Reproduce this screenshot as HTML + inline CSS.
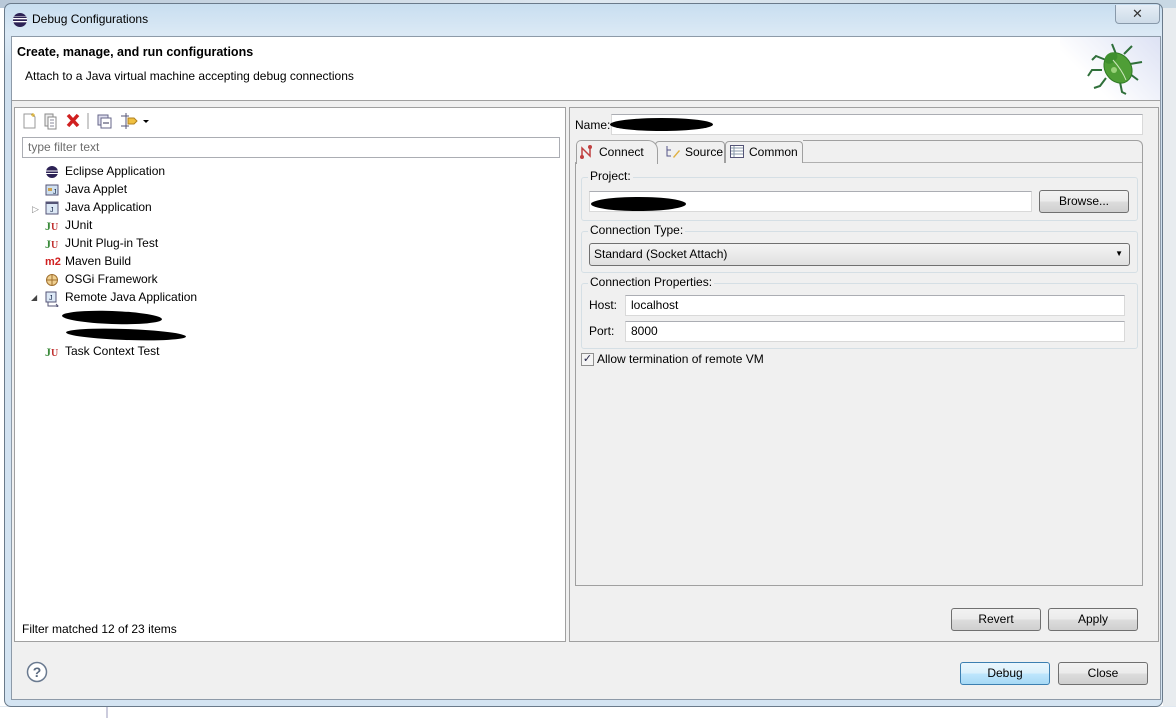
<!DOCTYPE html>
<html><head><style>
*{box-sizing:border-box;margin:0;padding:0}
body{width:1176px;height:718px;overflow:hidden;background:#fff;font-family:"Liberation Sans",sans-serif;font-size:12px;color:#000;position:relative}
.a{position:absolute}
.btn{position:absolute;border:1px solid #707070;border-radius:3px;background:linear-gradient(#f2f2f2 0%,#ebebeb 50%,#dddddd 51%,#cfcfcf 100%);text-align:center;line-height:20px;font-size:12px}
.inp{position:absolute;background:#fff;border:1px solid #d9d9d9;border-top-color:#abadb3;height:21px;line-height:19px;padding-left:5px}
.grp{position:absolute;border:1px solid #d5dfe5;border-radius:3px}
.lbl{position:absolute;background:#f0f0f0;padding:0 2px}
.tr{position:absolute;left:65px;font-size:12px}
.ic{position:absolute;left:45px;width:14px;height:14px}
.blot{position:absolute;background:#000;border-radius:50%}
</style></head><body>
<div class="a" style="left:1163px;top:0;width:13px;height:718px;background:#e8ecef"></div>
<div class="a" style="left:0;top:0;width:1176px;height:8px;background:linear-gradient(90deg,#b8c8d8,#dfe8f0,#c8d8e4)"></div>
<div class="a" style="left:0;top:706px;width:1176px;height:12px;background:#fff;border-top:1px solid #e0e8f0"></div>
<div class="a" style="left:106px;top:706px;width:2px;height:12px;background:#ccd"></div>
<div class="a" style="left:4px;top:3px;width:1159px;height:704px;border:1px solid #6a7a8a;border-radius:7px;background:linear-gradient(#c8def0,#dbe9f5 30px,#cfe0ef 60px,#d4e4f2)"></div>
<svg class="a" style="left:12px;top:12px" width="16" height="16" viewBox="0 0 16 16"><circle cx="8" cy="8" r="7" fill="#2c2255"/><rect x="1" y="6" width="14" height="1.3" fill="#fff"/><rect x="1" y="9" width="14" height="1.3" fill="#fff"/><rect x="2" y="4" width="12" height="0.8" fill="#fff" opacity=".6"/></svg>
<div class="a" style="left:32px;top:12px;font-size:12px">Debug Configurations</div>
<div class="a" style="left:1115px;top:5px;width:45px;height:19px;border:1px solid #8899aa;border-top:none;border-radius:0 0 4px 4px;background:linear-gradient(#e6eef6,#cddbe8);text-align:center;font-size:13px;color:#333;line-height:18px">✕</div>
<div class="a" style="left:11px;top:36px;width:1150px;height:664px;background:#f0f0f0;border:1px solid #8d9aa8"></div>
<div class="a" style="left:12px;top:37px;width:1148px;height:64px;background:#fff;border-bottom:1px solid #a0a0a0"></div>
<div class="a" style="left:1060px;top:37px;width:100px;height:63px;background:linear-gradient(225deg,#dde2f4,#fff 70%)"></div>
<div class="a" style="left:17px;top:45px;font-weight:bold;font-size:12.5px">Create, manage, and run configurations</div>
<div class="a" style="left:25px;top:69px">Attach to a Java virtual machine accepting debug connections</div>
<svg class="a" style="left:1086px;top:40px" width="60" height="56" viewBox="0 0 60 56"><g stroke="#2f6f3a" stroke-width="2" fill="none"><path d="M20 20 L10 16 L6 20"/><path d="M16 30 L6 30 L2 36"/><path d="M20 38 L14 46 L8 48"/><path d="M30 14 L26 4"/><path d="M38 14 L46 6"/><path d="M44 24 L56 22"/><path d="M44 34 L52 40"/><path d="M34 42 L36 52 L40 54"/></g><ellipse cx="32" cy="28" rx="13" ry="16" transform="rotate(-35 32 28)" fill="#4f9e36" stroke="#2f7a25"/><ellipse cx="25" cy="18" rx="7" ry="5" transform="rotate(-35 25 18)" fill="#3e8f2e"/><path d="M27 20 Q36 30 40 40" stroke="#cfe8bf" stroke-width="1" fill="none"/><circle cx="28" cy="30" r="3" fill="#9ad27a"/></svg>
<div class="a" style="left:14px;top:107px;width:552px;height:535px;background:#fff;border:1px solid #a0a0a0"></div>
<svg class="a" style="left:22px;top:112px" width="140" height="18" viewBox="0 0 140 18"><path d="M2 2h8l3 3v11H2z" fill="#fff" stroke="#999"/><path d="M11 1v4M9 3h4" stroke="#e0b020"/><path d="M23 2h8v12h-8z" fill="#eee" stroke="#888"/><path d="M26 5h8v12h-8z" fill="#fff" stroke="#888"/><path d="M28 8h4M28 11h4M28 14h4" stroke="#889"/><path d="M46 3l10 11M56 3l-10 11" stroke="#d02020" stroke-width="3.5"/><path d="M66 1v16" stroke="#999"/><rect x="76" y="3" width="10" height="10" fill="#dde" stroke="#668"/><rect x="79" y="6" width="10" height="10" fill="#fff" stroke="#668"/><path d="M81 11h6" stroke="#335"/><path d="M99 4h8M99 14h8M104 1v16" stroke="#557"/><path d="M106 6h6l3 3-3 3h-6z" fill="#f0c040" stroke="#b08020"/><path d="M121 8h6l-3 3z" fill="#000"/></svg>
<div class="inp" style="left:22px;top:137px;width:538px;color:#6d6d6d;border-color:#abadb3">type filter text</div>
<svg class="ic" style="top:165px" viewBox="0 0 14 14"><circle cx="7" cy="7" r="6" fill="#2c2255"/><rect x="1" y="5.5" width="12" height="1" fill="#fff"/><rect x="1" y="8" width="12" height="1" fill="#fff"/></svg>
<div class="tr" style="top:164px">Eclipse Application</div>
<svg class="ic" style="top:183px" viewBox="0 0 14 14"><rect x="1" y="2" width="12" height="10" fill="#cfe0f0" stroke="#557"/><path d="M3 5h4v3H3z" fill="#c9a050"/><text x="8" y="11" font-size="7" fill="#124">J</text></svg>
<div class="tr" style="top:182px">Java Applet</div>
<div class="a" style="left:32px;top:204px;font-size:9px;color:#888">▷</div>
<svg class="ic" style="top:201px" viewBox="0 0 14 14"><rect x="1" y="1" width="12" height="12" fill="#dce8f5" stroke="#557"/><rect x="1" y="1" width="12" height="2" fill="#557"/><text x="5" y="11" font-size="7" fill="#124">J</text></svg>
<div class="tr" style="top:200px">Java Application</div>
<div class="a" style="left:45px;top:219px;font-weight:bold;font-size:12px;color:#3a8a3a;font-family:'Liberation Serif',serif">J<span style="color:#c03030;font-size:10px">U</span></div>
<div class="tr" style="top:218px">JUnit</div>
<div class="a" style="left:45px;top:237px;font-weight:bold;font-size:12px;color:#3a8a3a;font-family:'Liberation Serif',serif">J<span style="color:#c03030;font-size:10px">U</span></div>
<div class="tr" style="top:236px">JUnit Plug-in Test</div>
<div class="a" style="left:45px;top:256px;font-weight:bold;font-size:11px;color:#d02020">m2</div>
<div class="tr" style="top:254px">Maven Build</div>
<svg class="ic" style="top:273px" viewBox="0 0 14 14"><circle cx="7" cy="7" r="5.5" fill="#f0d090" stroke="#a07030"/><path d="M7 1v12M1 7h12" stroke="#a07030"/></svg>
<div class="tr" style="top:272px">OSGi Framework</div>
<div class="a" style="left:31px;top:293px;font-size:8px;color:#444">◢</div>
<svg class="ic" style="top:291px;width:16px;height:16px" viewBox="0 0 16 16"><rect x="1" y="1" width="10" height="10" fill="#dce8f5" stroke="#557"/><text x="4" y="9" font-size="7" fill="#124">J</text><path d="M3 11v4h10M11 13l2 2-2 2" stroke="#557" fill="none"/></svg>
<div class="tr" style="top:290px">Remote Java Application</div>
<div class="blot" style="left:62px;top:311px;width:100px;height:13px;transform:rotate(2deg)"></div>
<div class="blot" style="left:66px;top:329px;width:120px;height:11px;transform:rotate(2deg)"></div>
<div class="a" style="left:45px;top:345px;font-weight:bold;font-size:12px;color:#3a8a3a;font-family:'Liberation Serif',serif">J<span style="color:#c03030;font-size:10px">U</span></div>
<div class="tr" style="top:344px">Task Context Test</div>
<div class="a" style="left:22px;top:622px">Filter matched 12 of 23 items</div>
<div class="a" style="left:569px;top:107px;width:590px;height:535px;border:1px solid #a0a0a0"></div>
<div class="a" style="left:575px;top:118px">Name:</div>
<div class="inp" style="left:611px;top:114px;width:532px"></div>
<div class="blot" style="left:610px;top:118px;width:103px;height:13px"></div>
<div class="a" style="left:575px;top:162px;width:568px;height:424px;border:1px solid #a0a0a0;border-top-color:#b0b0b0"></div>
<div class="a" style="left:725px;top:141px;width:78px;height:22px;border:1px solid #a0a0a0;border-bottom:none;border-radius:4px 4px 0 0;background:#f0f0f0"></div>
<div class="a" style="left:655px;top:141px;width:70px;height:22px;border:1px solid #a0a0a0;border-bottom:none;border-radius:4px 4px 0 0;background:#f0f0f0"></div>
<div class="a" style="left:576px;top:140px;width:82px;height:24px;border:1px solid #a0a0a0;border-bottom:none;border-radius:5px 10px 0 0;background:#f0f0f0"></div>
<div class="a" style="left:803px;top:140px;width:340px;height:23px;border-top:1px solid #a0a0a0;border-right:1px solid #a0a0a0;border-radius:0 6px 0 0"></div>
<svg class="a" style="left:580px;top:145px" width="14" height="14" viewBox="0 0 14 14"><path d="M2 12V3l8 8V2" stroke="#c04040" stroke-width="1.5" fill="none"/><circle cx="2" cy="12" r="2" fill="#c04040"/><circle cx="10" cy="2" r="2" fill="#c04040"/></svg>
<div class="a" style="left:599px;top:145px">Connect</div>
<svg class="a" style="left:665px;top:145px" width="16" height="14" viewBox="0 0 16 14"><path d="M2 1v10h4M2 5h4" stroke="#558" fill="none"/><path d="M8 12l6-7 1 1-6 7z" fill="#e0b040"/></svg>
<div class="a" style="left:685px;top:145px">Source</div>
<svg class="a" style="left:730px;top:145px" width="14" height="13" viewBox="0 0 14 13"><rect x="0.5" y="0.5" width="13" height="12" fill="#fff" stroke="#557"/><path d="M1 3h12M1 6h12M1 9h12M4 1v11" stroke="#89a"/></svg>
<div class="a" style="left:749px;top:145px">Common</div>
<div class="grp" style="left:581px;top:177px;width:557px;height:44px"></div>
<div class="lbl" style="left:588px;top:169px">Project:</div>
<div class="inp" style="left:589px;top:191px;width:443px"></div>
<div class="blot" style="left:591px;top:197px;width:95px;height:14px"></div>
<div class="btn" style="left:1039px;top:190px;width:90px;height:23px">Browse...</div>
<div class="grp" style="left:581px;top:231px;width:557px;height:42px"></div>
<div class="lbl" style="left:588px;top:223px">Connection Type:</div>
<div class="btn" style="left:589px;top:243px;width:541px;height:23px;text-align:left;padding-left:4px;background:linear-gradient(#f4f4f4,#e0e0e0)">Standard (Socket Attach)<span style="position:absolute;right:6px;top:0;font-size:8px">▼</span></div>
<div class="grp" style="left:581px;top:283px;width:557px;height:66px"></div>
<div class="lbl" style="left:588px;top:275px">Connection Properties:</div>
<div class="a" style="left:589px;top:298px">Host:</div>
<div class="inp" style="left:625px;top:295px;width:500px">localhost</div>
<div class="a" style="left:589px;top:324px">Port:</div>
<div class="inp" style="left:625px;top:321px;width:500px">8000</div>
<div class="a" style="left:581px;top:353px;width:13px;height:13px;border:1px solid #8f8f8f;background:#f4f4f4;font-size:11px;line-height:11px;text-align:center;color:#224">✓</div>
<div class="a" style="left:597px;top:352px">Allow termination of remote VM</div>
<div class="btn" style="left:951px;top:608px;width:90px;height:23px">Revert</div>
<div class="btn" style="left:1048px;top:608px;width:90px;height:23px">Apply</div>
<svg class="a" style="left:26px;top:661px" width="22" height="22" viewBox="0 0 22 22"><circle cx="11" cy="11" r="9.5" fill="#fff" stroke="#6a7a90" stroke-width="1.5"/><text x="11" y="16" font-size="14" font-weight="bold" text-anchor="middle" fill="#5a6a80" font-family="Liberation Sans">?</text></svg>
<div class="btn" style="left:960px;top:662px;width:90px;height:23px;border-color:#3c7fb1;background:linear-gradient(#eaf6fd,#d9f0fc 50%,#bee6fd 51%,#a7d9f5)">Debug</div>
<div class="btn" style="left:1058px;top:662px;width:90px;height:23px">Close</div>
</body></html>
